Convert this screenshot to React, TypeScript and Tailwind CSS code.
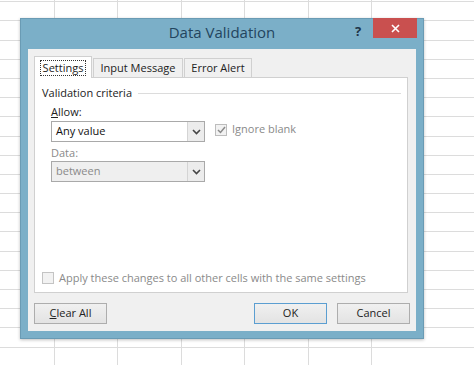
import React from "react"

const cols = [55, 63, 64, 63, 64, 63, 102]
const rows = Array.from({ length: 20 })

function Chevron() {
  return (
    <svg width="9" height="6" viewBox="0 0 9 6" className="block">
      <path d="M1 1 L4.5 4.5 L8 1" fill="none" stroke="#444" strokeWidth="1.6" />
    </svg>
  )
}

function Select({ value, disabled }: { value: string; disabled?: boolean }) {
  return (
    <div
      className={
        "flex h-[21px] w-[154px] items-stretch border border-[#a9a9a9] " +
        (disabled ? "bg-[#efefef]" : "bg-white")
      }
    >
      <div className={"flex flex-1 items-center pl-[4px] " + (disabled ? "text-[#8a8a8a]" : "text-[#111]")}>{value}</div>
      <div className="flex w-[17px] items-center justify-center border-l border-[#d4d4d4] bg-[#ececec]">
        <Chevron />
      </div>
    </div>
  )
}

function Button({ children, primary }: { children: React.ReactNode; primary?: boolean }) {
  return (
    <div
      className={
        "flex h-[21px] w-[73px] items-center justify-center border bg-gradient-to-b from-[#f0f0f0] to-[#e3e3e3] text-[#222] " +
        (primary ? "border-[#5b9ed1]" : "border-[#adadad]")
      }
    >
      {children}
    </div>
  )
}

export default function App() {
  return (
    <div className="relative h-[365px] w-[474px] overflow-hidden bg-white font-['Open_Sans','Noto_Sans',sans-serif] text-[11px]">
      {/* sheet grid behind the dialog */}
      <div className="-mt-[17px] flex flex-col">
        {rows.map((_, r) => (
          <div key={r} className="flex h-[19.2px] shrink-0">
            {cols.map((w, c) => (
              <div
                key={c}
                style={{ width: w }}
                className={"shrink-0 border-b border-[#dcdcdc] " + (c < cols.length - 1 ? "border-r" : "")}
              />
            ))}
          </div>
        ))}
      </div>

      {/* dialog */}
      <div className="absolute left-[20px] top-[18px] flex h-[321px] w-[404px] flex-col border border-[#6a9bb4] bg-[#7bafc8] shadow-[0_1px_3px_rgba(0,0,0,0.25)]">
        <div className="relative flex h-[30px] shrink-0 items-center justify-center">
          <span className="-mt-[3px] text-[15px] text-[#23455e]">Data Validation</span>
          <span className="absolute left-[334px] top-[3px] text-[13px] font-bold text-[#1d3447]">?</span>
          <div className="absolute left-[352px] top-[-1px] flex h-[20px] w-[44px] items-center justify-center bg-[#c9504f]">
            <svg width="9" height="9" viewBox="0 0 9 9">
              <path d="M1 1 L8 8 M8 1 L1 8" stroke="#fff" strokeWidth="1.6" />
            </svg>
          </div>
        </div>

        <div className="mx-[7px] flex h-[282px] flex-col bg-[#f0f0f0] px-[6px] pt-[7px]">
          {/* tabs */}
          <div className="flex h-[21px] items-end">
            <div className="relative z-10 -mb-px flex h-[22px] w-[58px] items-center justify-center border border-b-0 border-[#d0d0d0] bg-white">
              <span className="border border-dotted border-[#333] px-[2px] leading-[14px] text-[#222]">Settings</span>
            </div>
            <div className="ml-[1px] flex h-[19px] w-[90px] items-center justify-center border border-b-0 border-[#d0d0d0] bg-[#f0f0f0] text-[#222]">
              Input Message
            </div>
            <div className="ml-[1px] flex h-[19px] w-[68px] items-center justify-center border border-b-0 border-[#d0d0d0] bg-[#f0f0f0] text-[#222]">
              Error Alert
            </div>
          </div>

          {/* panel */}
          <div className="flex h-[216px] w-[374px] flex-col border border-[#d0d0d0] bg-white px-[7px]">
            <div className="mt-[7px] flex h-[16px] items-center gap-[6px]">
              <span className="text-[#222]">Validation criteria</span>
              <div className="mr-[-1px] h-px flex-1 bg-[#dcdcdc]" />
            </div>

            <div className="ml-[9px] mt-[3px] flex flex-col">
              <span className="h-[16px] leading-[16px] text-[#222]">
                <span className="underline">A</span>llow:
              </span>
              <div className="mt-[1px] flex items-center gap-[10px]">
                <Select value="Any value" />
                <div className="mb-[4px] flex items-center gap-[5px] text-[#8a8a8a]">
                  <div className="flex h-[12px] w-[12px] items-center justify-center border border-[#bdbdbd] bg-[#f2f2f2]">
                    <svg width="9" height="8" viewBox="0 0 9 8">
                      <path d="M1 4 L3.5 6.5 L8 1" fill="none" stroke="#8a8a8a" strokeWidth="1.5" />
                    </svg>
                  </div>
                  <span>Ignore blank</span>
                </div>
              </div>
              <span className="mt-[3px] h-[16px] leading-[16px] text-[#8a8a8a]">Data:</span>
              <div>
                <Select value="between" disabled />
              </div>
            </div>

            <div className="mt-auto mb-[6px] flex items-center gap-[5px] text-[#8a8a8a]">
              <div className="h-[12px] w-[12px] border border-[#c4c4c4] bg-[#f2f2f2]" />
              <span>Apply these changes to all other cells with the same settings</span>
            </div>
          </div>

          {/* buttons */}
          <div className="mt-[10px] flex items-center">
            <Button>
              <span>
                <span className="underline">C</span>lear All
              </span>
            </Button>
            <div className="flex-1" />
            <Button primary>OK</Button>
            <div className="w-[10px]" />
            <Button>Cancel</Button>
          </div>
        </div>
      </div>
    </div>
  )
}
